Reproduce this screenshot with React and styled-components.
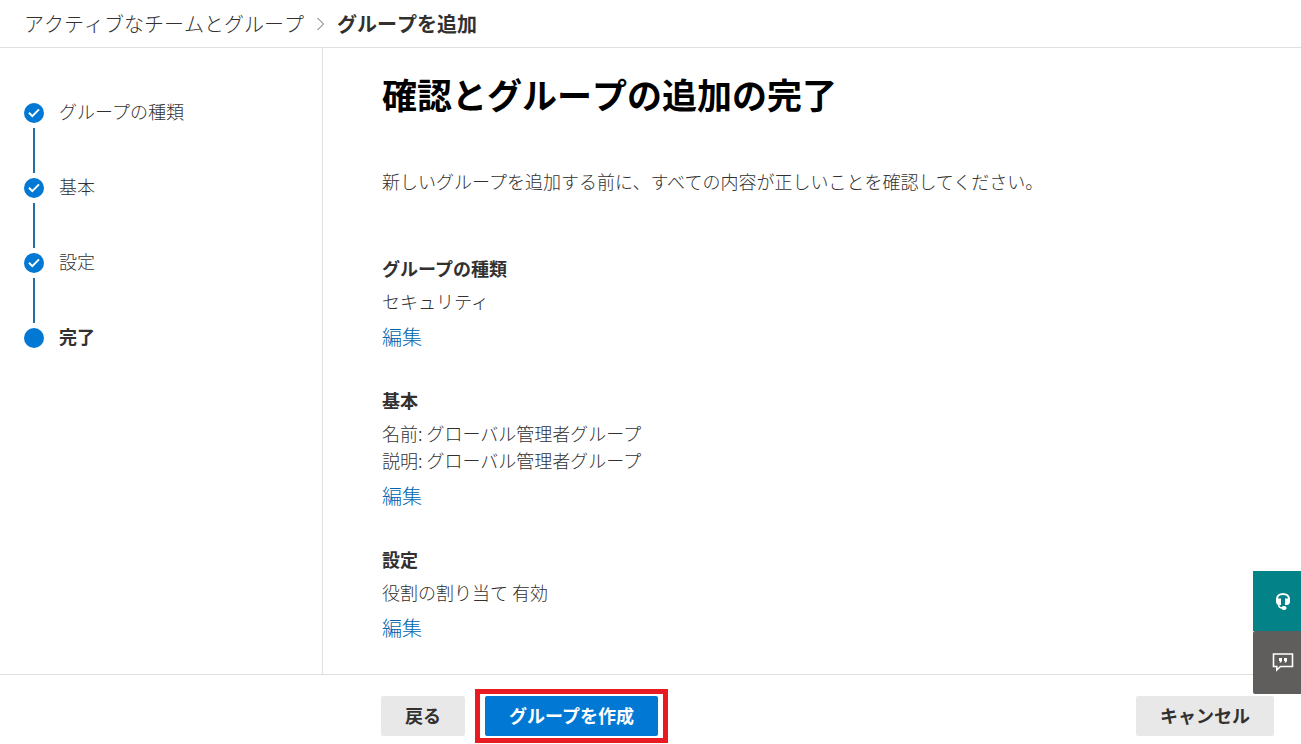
import React from 'react'
import styled, {createGlobalStyle} from 'styled-components'


const GlobalStl = createGlobalStyle`
  * {
    box-sizing: border-box;
  }

  body {
    margin: 0;
    background-color: #fff;
    color: #323130;
    font-family: "Noto Sans CJK JP", sans-serif;
    font-size: 18px;
    font-weight: 300;
    line-height: 27px;
  }
`

const PageStl = styled.div`
  display: flex;
  flex-direction: column;
  min-height: 100vh;
`

const BreadcrumbStl = styled.nav`
  display: flex;
  align-items: center;
  gap: 12px;
  padding: 9px 24px 8px;
  border-bottom: 1px solid #e1dfdd;
  font-size: 20px;
  font-kerning: none;
  line-height: 30px;
`

const CrumbLinkStl = styled.a`
  color: #323130;
  text-decoration: none;
`

const CrumbCurrentStl = styled.span`
  font-weight: 700;
`

const BodyStl = styled.div`
  display: flex;
  flex: 1;
`

const SidebarStl = styled.aside`
  flex: 0 0 323px;
  padding: 50px 24px;
  border-right: 1px solid #e1dfdd;
`

const StepsStl = styled.ol`
  display: flex;
  flex-direction: column;
  gap: 5px;
  margin: 0;
  padding: 0;
  list-style: none;
`

const StepStl = styled.li`
  display: flex;
  gap: 15px;
  font-weight: ${props => props.$current ? 700 : 300};
`

const StepMarkStl = styled.div`
  display: flex;
  flex-direction: column;
  align-items: center;
  gap: 5px;
  padding-top: 5px;
  margin-bottom: -5px;
`

const DotStl = styled.span`
  display: flex;
  align-items: center;
  justify-content: center;
  width: 20px;
  height: 20px;
  border-radius: 50%;
  background-color: #0078d4;
`

const LineStl = styled.span`
  width: 2px;
  height: 45px;
  background-color: #1f6fa5;
`

const MainStl = styled.main`
  flex: 1;
  padding: 22px 60px 32px 59px;
`

const TitleStl = styled.h1`
  margin: 0 0 50px;
  color: #000;
  font-size: 35px;
  font-weight: 700;
  font-kerning: none;
  line-height: 48px;
`

const IntroStl = styled.p`
  margin: 0 0 60px;
`

const SectionStl = styled.section`
  margin-bottom: 36px;

  &:last-child {
    margin-bottom: 0;
  }
`

const SectionTitleStl = styled.h2`
  margin: 0 0 6px;
  font-size: 18px;
  font-weight: 700;
  line-height: 27px;
`

const TextStl = styled.p`
  margin: 0;
`

const EditLinkStl = styled.a`
  display: inline-block;
  margin-top: 8px;
  color: #0062ad;
  font-size: 20px;
  line-height: 28px;
  text-decoration: none;
  vertical-align: top;
`

const FooterStl = styled.footer`
  display: flex;
  align-items: center;
  gap: 10px;
  padding: 14px 27px 1px 381px;
  border-top: 1px solid #e1dfdd;
`

const ButtonStl = styled.button`
  display: block;
  height: 40px;
  padding: 0 24px 2px;
  border: none;
  border-radius: 2px;
  background-color: ${props => props.$primary ? '#0078d4' : '#e8e8e8'};
  color: ${props => props.$primary ? '#fff' : '#323130'};
  font-family: inherit;
  font-size: 18px;
  font-weight: 700;
  line-height: 27px;
  cursor: pointer;
`

const HighlightStl = styled.div`
  padding: 2px 5px;
  border: 5px solid #e81b23;
`

const SpacerStl = styled.div`
  flex: 1;
`

const HelpStl = styled.div`
  position: fixed;
  right: 0;
  bottom: 50px;
  display: flex;
  flex-direction: column;
`

const HelpButtonStl = styled.button`
  display: flex;
  align-items: center;
  justify-content: flex-end;
  width: 48px;
  height: ${props => props.$feedback ? 63 : 60}px;
  padding: 0 7px 0 0;
  border: none;
  border-radius: ${props => props.$feedback ? '2px 0 0 2px' : 0};
  background-color: ${props => props.$feedback ? '#605e5c' : '#038387'};
  cursor: pointer;
`


const steps = [
    {title: 'グループの種類', done: true},
    {title: '基本', done: true},
    {title: '設定', done: true},
    {title: '完了', done: false},
]

const sections = [
    {title: 'グループの種類', lines: ['セキュリティ']},
    {title: '基本', lines: ['名前: グローバル管理者グループ', '説明: グローバル管理者グループ']},
    {title: '設定', lines: ['役割の割り当て 有効']},
]

const ChevronIcon = () => (
    <svg width="9" height="14" viewBox="0 0 9 14" fill="none" stroke="#605e5c" aria-hidden="true">
        <path d="M1.500 1l6 6-6 6"/>
    </svg>
)

const CheckIcon = () => (
    <svg width="12" height="10" viewBox="0 0 12 10" fill="none" stroke="#fff" strokeWidth="2" aria-hidden="true">
        <path d="M1 4.8l3.3 3.3L11 1.4"/>
    </svg>
)

const HeadsetIcon = () => (
    <svg width="22" height="22" viewBox="0 0 22 22" fill="none" aria-hidden="true">
        <path d="M5 9.500V9c0-3 2.500-5 6-5s6 2 6 5v.5" stroke="#fff" strokeWidth="2"/>
        <path d="M4 8.500h5V15H7.200C5.200 15 4 13.600 4 11.800zM18 8.500h-5V15h1.800c2 0 3.200-1.400 3.200-3.200z" fill="#fff"/>
        <path d="M6.500 14c0 2.800 1.500 4 4 4" stroke="#fff" strokeWidth="1.600"/>
        <rect x="9.500" y="16" width="5" height="4" rx="2" fill="#fff"/>
    </svg>
)

const FeedbackIcon = () => (
    <svg width="22" height="21" viewBox="0 0 22 21" fill="none" aria-hidden="true">
        <path d="M1.500 2h19v12.500H8.500L4.800 18v-3.500H1.500z" stroke="#fff" strokeWidth="1.600"/>
        <path d="M7 6h3v3l-1 1.500H7.500L8 9H7zM12 6h3v3l-1 1.500h-1.500L13 9h-1z" fill="#fff"/>
    </svg>
)


export default function App() {
    return (
        <PageStl>
            <GlobalStl/>
            <BreadcrumbStl>
                <CrumbLinkStl href="#">アクティブなチームとグループ</CrumbLinkStl>
                <ChevronIcon/>
                <CrumbCurrentStl>グループを追加</CrumbCurrentStl>
            </BreadcrumbStl>
            <BodyStl>
                <SidebarStl>
                    <StepsStl>
                        {steps.map((step, i) => (
                            <StepStl key={step.title} $current={!step.done}>
                                <StepMarkStl>
                                    <DotStl>{step.done ? <CheckIcon/> : null}</DotStl>
                                    {i < steps.length - 1 ? <LineStl/> : null}
                                </StepMarkStl>
                                <span>{step.title}</span>
                            </StepStl>
                        ))}
                    </StepsStl>
                </SidebarStl>
                <MainStl>
                    <TitleStl>確認とグループの追加の完了</TitleStl>
                    <IntroStl>新しいグループを追加する前に、すべての内容が正しいことを確認してください。</IntroStl>
                    {sections.map(section => (
                        <SectionStl key={section.title}>
                            <SectionTitleStl>{section.title}</SectionTitleStl>
                            {section.lines.map(line => <TextStl key={line}>{line}</TextStl>)}
                            <EditLinkStl href="#">編集</EditLinkStl>
                        </SectionStl>
                    ))}
                </MainStl>
            </BodyStl>
            <FooterStl>
                <ButtonStl type="button">戻る</ButtonStl>
                <HighlightStl>
                    <ButtonStl type="button" $primary>グループを作成</ButtonStl>
                </HighlightStl>
                <SpacerStl/>
                <ButtonStl type="button">キャンセル</ButtonStl>
            </FooterStl>
            <HelpStl>
                <HelpButtonStl type="button" aria-label="ヘルプとサポート"><HeadsetIcon/></HelpButtonStl>
                <HelpButtonStl type="button" aria-label="フィードバック" $feedback><FeedbackIcon/></HelpButtonStl>
            </HelpStl>
        </PageStl>
    )
}
